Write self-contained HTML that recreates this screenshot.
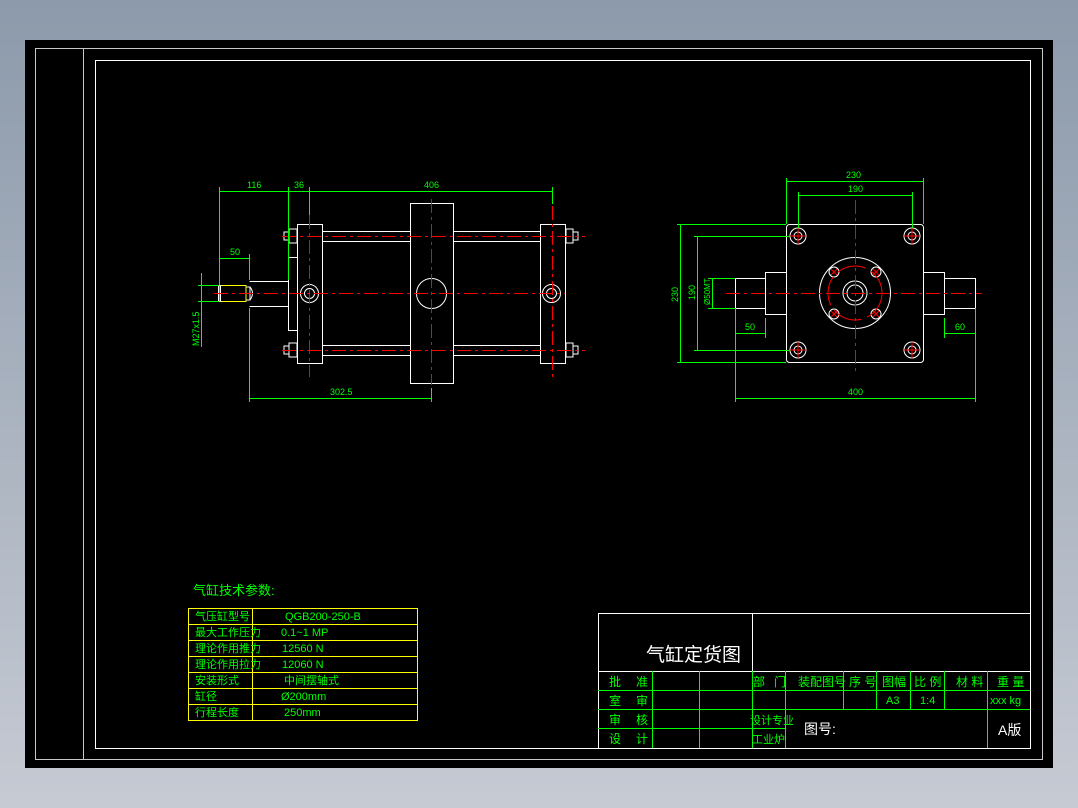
<!DOCTYPE html>
<html><head><meta charset="utf-8"><style>
html,body{margin:0;padding:0;width:1078px;height:808px;overflow:hidden;background:linear-gradient(#8c9aab,#c6cad3);}
svg{position:absolute;left:0;top:0}
text{font-family:"Liberation Sans","Noto Sans CJK SC",sans-serif}
</style></head><body>
<svg width="1078" height="808" viewBox="0 0 1078 808">
<rect x="25" y="40" width="1028" height="728" fill="#000"/>
<g fill="none" stroke="#c8c8c8" stroke-width="1">
<rect x="35.5" y="48.5" width="1007" height="711"/>
<line x1="83.5" y1="48" x2="83.5" y2="760"/>
</g>
<rect x="95.5" y="60.5" width="935" height="688" fill="none" stroke="#fff"/>

<!-- LEFT VIEW -->
<g fill="none" stroke="#fff" stroke-width="1">
<rect x="297.5" y="224.5" width="25" height="139"/>
<rect x="540.5" y="224.5" width="25" height="139"/>
<rect x="410.5" y="203.5" width="43" height="180"/>
<path d="M322 231.5H410M453 231.5H540M322 241.5H410M453 241.5H540M322 345.5H410M453 345.5H540M322 355.5H410M453 355.5H540"/>
<path d="M249.5 281.5H288.5V306.5H249.5"/>
<path d="M288.5 257.5H297M288.5 257.5V330.5H297"/>
<circle cx="309.5" cy="293.5" r="9"/><circle cx="309.5" cy="293.5" r="5"/>
<circle cx="551.5" cy="293.5" r="9"/><circle cx="551.5" cy="293.5" r="5"/>
<circle cx="431.5" cy="293.5" r="15"/>
<path d="M289 229h8v14h-8zM284 232h5v8h-5zM289 343h8v14h-8zM284 346h5v8h-5z"/>
<path d="M566 229h7v14h-7zM573 232h5v8h-5zM566 343h7v14h-7zM573 346h5v8h-5z"/>
<path d="M246 287h4v13h-4zM250 287q5 6 0 13"/>
</g>
<rect x="220" y="285.5" width="26" height="16" fill="none" stroke="#ff0" stroke-width="1"/>
<rect x="218.5" y="285.5" width="2" height="16" fill="none" stroke="#fff" stroke-width="1"/>
<g stroke="#f00" stroke-width="1" stroke-dasharray="14 4 3 4">
<path d="M214 293.5H565M282 236.5H585M282 350.5H585M309.5 215V377M431.5 199V385M552.5 206V380"/>
</g>
<g stroke="#0f0" stroke-width="1" fill="none">
<path d="M219 191.5H552M219.5 187V285M288.5 187V280M309.5 187V215M552.5 187V204"/>
<path d="M219 258.5H249M249.5 254V280"/>
<path d="M201.5 273V347M198 285.5H219M198 301.5H219"/>
<path d="M249 398.5H431M249.5 308V402M431.5 388V402"/>
</g>
<g fill="#0f0" font-size="9">
<text x="247" y="188">116</text><text x="294" y="188">36</text><text x="424" y="188">406</text>
<text x="230" y="255">50</text><text x="330" y="395">302.5</text>
<text transform="translate(199,346) rotate(-90)" font-size="9">M27x1.5</text>
</g>

<!-- RIGHT VIEW -->
<g fill="none" stroke="#fff" stroke-width="1">
<rect x="786.5" y="224.5" width="137" height="138" rx="3"/>
<path d="M786 272.5H765.5V314.5H786M765.5 278.5H735.5V308.5H765.5"/>
<path d="M923 272.5H944.5V314.5H923M944.5 278.5H975.5V308.5H944.5"/>
<circle cx="855" cy="293" r="35.5"/><circle cx="855" cy="293" r="12"/><circle cx="855" cy="293" r="8"/>
<circle cx="834" cy="272" r="5"/><circle cx="876" cy="272" r="5"/><circle cx="834" cy="314" r="5"/><circle cx="876" cy="314" r="5"/>
<circle cx="798" cy="236" r="8"/><circle cx="798" cy="236" r="4"/>
<circle cx="912" cy="236" r="8"/><circle cx="912" cy="236" r="4"/>
<circle cx="798" cy="350" r="8"/><circle cx="798" cy="350" r="4"/>
<circle cx="912" cy="350" r="8"/><circle cx="912" cy="350" r="4"/>
</g>
<circle cx="855" cy="293" r="27" fill="none" stroke="#f00" stroke-dasharray="30 6"/>
<g stroke="#f00" stroke-width="1" stroke-dasharray="14 4 3 4">
<path d="M726 293.5H982M855.5 200V375"/>
<path d="M790 236h16M798 228v16M904 236h16M912 228v16M790 350h16M798 342v16M904 350h16M912 342v16" stroke-dasharray="none"/>
<path d="M831 269l6 6M837 269l-6 6M873 269l6 6M879 269l-6 6M831 311l6 6M837 311l-6 6M873 311l6 6M879 311l-6 6" stroke-dasharray="none"/>
</g>
<g stroke="#0f0" stroke-width="1" fill="none">
<path d="M786 181.5H923M786.5 178V224M923.5 178V224"/>
<path d="M798 195.5H912M798.5 192V228M912.5 192V228"/>
<path d="M680.5 224V362M677 224.5H786M677 362.5H786"/>
<path d="M697.5 236V350M694 236.5H790M694 350.5H790"/>
<path d="M712.5 278V308M708 278.5H735M708 308.5H735"/>
<path d="M735 333.5H765M765.5 318V338M944 333.5H975M944.5 318V338"/>
<path d="M735 398.5H975M735.5 308V402M975.5 308V402"/>
</g>
<g fill="#0f0" font-size="9">
<text x="846" y="178">230</text><text x="848" y="192">190</text><text x="848" y="395">400</text>
<text x="745" y="330">50</text><text x="955" y="330">60</text>
<text transform="translate(678,302) rotate(-90)">230</text>
<text transform="translate(695,300) rotate(-90)">190</text>
<text transform="translate(710,305) rotate(-90)" font-size="8">Ø50MT</text>
</g>

<!-- PARAM TABLE -->
<text x="193" y="595" fill="#0f0" font-size="13">气缸技术参数:</text>
<g stroke="#ff0" fill="none" stroke-width="1">
<rect x="188.5" y="608.5" width="229" height="112"/>
<path d="M252.5 608V720M188 624.5H417M188 640.5H417M188 656.5H417M188 672.5H417M188 688.5H417M188 704.5H417"/>
</g>
<g fill="#0f0" font-size="11">
<text x="195" y="620">气压缸型号</text><text x="285" y="620">QGB200-250-B</text>
<text x="195" y="636">最大工作压力</text><text x="281" y="636">0.1~1 MP</text>
<text x="195" y="652">理论作用推力</text><text x="282" y="652">12560 N</text>
<text x="195" y="668">理论作用拉力</text><text x="282" y="668">12060 N</text>
<text x="195" y="684">安装形式</text><text x="284" y="684">中间摆轴式</text>
<text x="195" y="700">缸径</text><text x="281" y="700">Ø200mm</text>
<text x="195" y="716">行程长度</text><text x="284" y="716">250mm</text>
</g>

<!-- TITLE BLOCK -->
<g stroke="#fff" fill="none" stroke-width="1">
<path d="M598.5 748V613.5H1030M598 671.5H1030M752.5 613V671"/>
</g>
<g stroke="#0f0" fill="none" stroke-width="1">
<path d="M598 690.5H1030M598 709.5H1030M598 728.5H785"/>
<path d="M652.5 671V748M699.5 671V748M752.5 671V748M785.5 671V748M843.5 671V709M876.5 671V709M910.5 671V709M944.5 671V709M987.5 671V748"/>
</g>
<text x="646" y="661" fill="#fff" font-size="19">气缸定货图</text>
<g fill="#0f0" font-size="12">
<text x="609" y="686">批</text><text x="636" y="686">准</text>
<text x="609" y="705">室</text><text x="636" y="705">审</text>
<text x="609" y="724">审</text><text x="636" y="724">核</text>
<text x="609" y="743">设</text><text x="636" y="743">计</text>
<text x="753" y="686">部</text><text x="774" y="686">门</text>
<text x="798" y="686">装配图号</text>
<text x="849" y="686">序 号</text>
<text x="882" y="686">图幅</text>
<text x="914" y="686">比 例</text>
<text x="956" y="686">材 料</text>
<text x="997" y="686">重 量</text>
<text x="886" y="704" font-size="11">A3</text>
<text x="920" y="704" font-size="11">1:4</text>
<text x="990" y="704" font-size="11">xxx kg</text>
<text x="750" y="724" font-size="11">设计专业</text>
<text x="752" y="743" font-size="11">工业炉</text>
</g>
<text x="804" y="734" fill="#fff" font-size="14">图号:</text>
<text x="998" y="735" fill="#fff" font-size="14">A版</text>
</svg>
</body></html>
